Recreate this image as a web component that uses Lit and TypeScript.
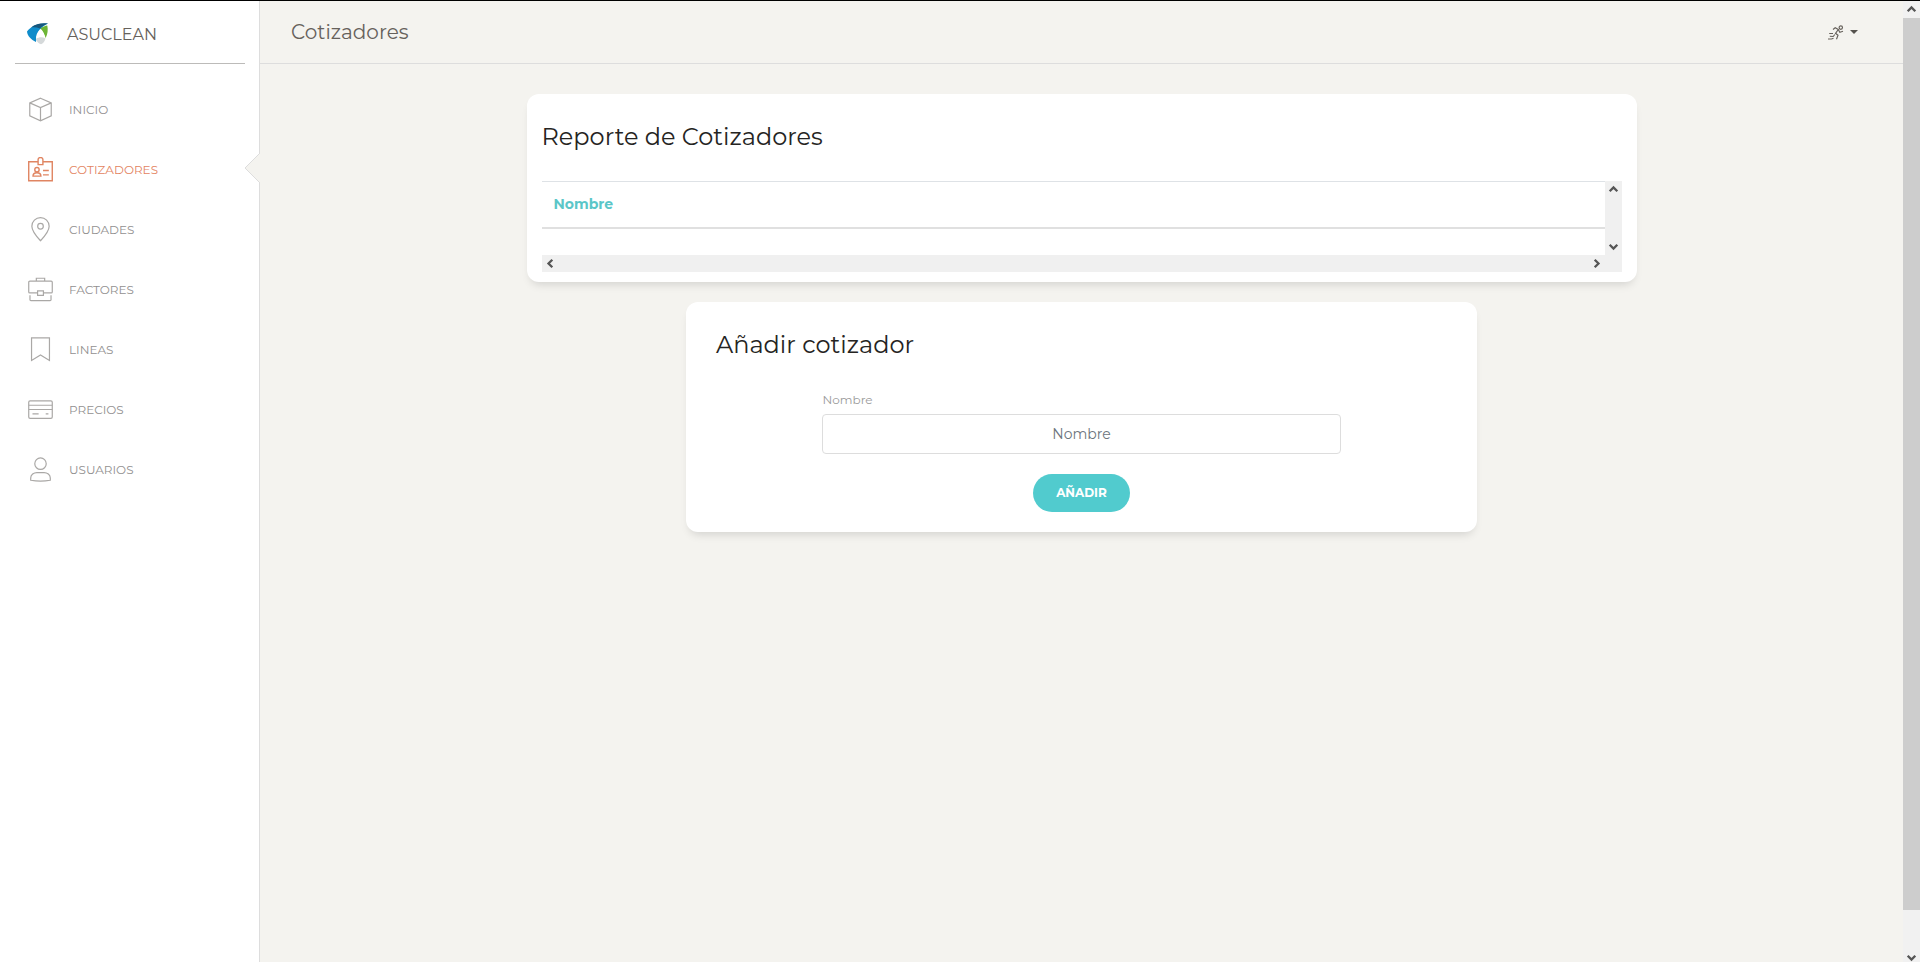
import { LitElement, html, css, svg } from "lit";
import { customElement } from "lit/decorators.js";

const icons: Record<string, unknown> = {
  box: svg`<path d="M12 1.2 22.3 5.6V18L12 22.8 1.7 18V5.6ZM1.7 5.6 12 10.2 22.3 5.6M12 10.2V22.8"/>`,
  badge: svg`<path d="M9.6 4.5H.7V22.8H23.3V4.5H14.4"/><path d="M9.7 2.5a2.3 2 0 0 1 4.6 0V7.3H9.7Z"/><circle cx="8.6" cy="12.2" r="2.1"/><path d="M4.8 18.4c0-2.3 1.4-3.3 3.8-3.3s3.8 1 3.8 3.3ZM14.4 13H20M14.4 17.2H20"/>`,
  pin: svg`<path d="M20.3 8.900C20.3 14 12 22.8 12 22.8S3.7 14 3.7 8.900a8.3 8.3 0 0 1 16.6 0Z"/><circle cx="12" cy="8.900" r="2.7"/>`,
  briefcase: svg`<path d="M8 4V1.2H16V4M9.2 15.3H1.7A1 1 0 0 1 .7 14.3V5A1 1 0 0 1 1.7 4H22.3A1 1 0 0 1 23.3 5V14.3A1 1 0 0 1 22.3 15.3H14.8M1.9 17.5V21.8A.9.9 0 0 0 2.8 22.7H21.2A.9.9 0 0 0 22.1 21.8V17.5M9.2 13.3H14.8V17.7H9.2Z"/>`,
  bookmark: svg`<path d="M3.4.8H20.6V22.6L12 17.3 3.4 22.6Z"/>`,
  card: svg`<rect x=".7" y="3.7" width="22.6" height="16.8" rx="1.3"/><path d="M.7 7.9H23.3M.7 12H23.3M4.3 16.2H10.2M17 16.2H19.6"/>`,
  user: svg`<circle cx="12" cy="6.4" r="5.5"/><path d="M2.6 22.3V20.2C2.6 17 5.6 15 8.5 15H15.5C18.4 15 21.4 17 21.4 20.2V22.3C15.5 23.3 8.5 23.3 2.6 22.3Z"/>`,
};

const items = [
  ["box", "INICIO"],
  ["badge", "COTIZADORES"],
  ["pin", "CIUDADES"],
  ["briefcase", "FACTORES"],
  ["bookmark", "LINEAS"],
  ["card", "PRECIOS"],
  ["user", "USUARIOS"],
];
const current = "COTIZADORES";

const chevron = (turn: string) => html`<svg class="chev ${turn}" viewBox="0 0 17 17"><path d="M4.7 10.3 8.5 6.5 12.3 10.3"/></svg>`;

@customElement("app-root")
export class AppRoot extends LitElement {
  static styles = css`
    :host { display: flex; box-sizing: border-box; height: 962px; border-top: 1px solid #000; background: #f4f3ef; font-family: Montserrat, Inter, sans-serif; color: #252422; overflow: hidden; }
    * { box-sizing: border-box; }
    .sidebar { width: 260px; flex: none; background: #fff; border-right: 1px solid #ddd; }
    .brand { display: flex; align-items: center; height: 63px; margin: 0 14px 0 15px; padding: 6px 0 0 12px; border-bottom: 1px solid #bcbbb9; }
    .logo { width: 22px; height: 22px; margin: 0 18px 2px 0; }
    .name { font-size: 16px; line-height: 20px; color: #66615b; }
    nav { padding-top: 15px; }
    .item { position: relative; display: flex; align-items: center; height: 60px; padding-left: 28px; color: #929090; font-size: 12px; }
    .item svg { width: 25px; height: 25px; margin-right: 16px; fill: none; stroke: #aaa8a6; stroke-width: 1.15; }
    .active { color: #e3845f; }
    .active svg { stroke: #e08562; stroke-width: 1.35; }
    .item .notch { position: absolute; right: -1px; top: 14px; width: 16px; height: 30px; margin: 0; stroke: #ddd; stroke-width: 1; }
    main { flex: 1; }
    header { display: flex; justify-content: space-between; align-items: center; height: 63px; padding: 0 45px 0 31px; border-bottom: 1px solid #ddd; }
    .page { font-size: 20px; color: #66615b; }
    .menu { display: flex; align-items: center; gap: 6px; }
    .run { width: 16px; height: 16px; margin-top: 2px; fill: none; stroke: #66615b; stroke-width: 1.15; }
    .caret { border: 4px solid transparent; border-top-color: #55524e; border-bottom: 0; }
    .card { margin: 0 auto; background: #fff; border-radius: 12px; box-shadow: 0 6px 10px -4px rgba(0,0,0,.15); }
    .report { width: 1110px; height: 188px; margin-top: 30px; padding: 26px 15px 0; }
    .form { width: 791px; height: 230px; margin-top: 20px; padding: 26px 30px 0; }
    h4 { margin: 0; font-size: 24px; line-height: 34px; font-weight: 400; }
    .scroller { display: grid; grid-template-columns: 1fr 17px; grid-template-rows: 74px 17px; margin-top: 27px; background: #f0f0f0; }
    .table { background: #fff; border-top: 1px solid #dee2e6; }
    .th { display: flex; align-items: center; height: 47px; padding: 0 12px 1px; border-bottom: 2px solid #e0e0e0; color: #5bc6c8; font-size: 14px; font-weight: 700; }
    .bar-v { display: flex; flex-direction: column; justify-content: space-between; }
    .bar-h { display: flex; justify-content: space-between; }
    .chev { display: block; width: 17px; height: 17px; flex: none; fill: none; stroke: #555; stroke-width: 2.3; }
    .down { transform: rotate(180deg); }
    .left { transform: rotate(-90deg); }
    .right { transform: rotate(90deg); }
    .fields { display: flex; flex-direction: column; align-items: center; width: 519px; margin: 28px auto 0; }
    label { align-self: flex-start; height: 24px; line-height: 20px; padding-left: .5px; font-size: 12px; color: #9a9a9a; }
    input { width: 519px; height: 40px; border: 1px solid #ddd; border-radius: 4px; font: 400 14px Montserrat, Inter, sans-serif; text-align: center; outline: 0; }
    input::placeholder { color: #6c757d; opacity: 1; }
    button { width: 97px; height: 38px; margin-top: 20px; padding: 0 0 1px; border: 0; border-radius: 30px; background: #51cbce; color: #fff; font: 700 12px Montserrat, Inter, sans-serif; }
    .page-scroll { display: flex; flex-direction: column; width: 17px; flex: none; background: #f1f1f1; }
    .thumb { height: 892px; flex: none; background: #cdcdcd; }
    .page-scroll .down { margin-top: 39px; }
  `;
  render() {
    return html`
      <aside class="sidebar">
        <div class="brand">
          <svg class="logo" viewBox="0 0 22 22">
            <path d="M0 8.5C4 2.500 13-.5 21 .6 14.500 3.500 9.500 9 9 19 4 16.500.5 13 0 8.500Z" fill="#0f8ccb"/>
            <path d="M4 4.500C9 .6 15-.3 21 .6 18 1.800 15 3.300 13 5.400 10 4.300 7 4 4 4.500Z" fill="#17577c"/>
            <path d="M13.500 5.500C15.500 3.800 18.500 2.800 20.300 2.600 21.200 7 20.700 11.500 18.600 15 17.500 11 16 8 13.500 5.500Z" fill="#6db535"/>
            <path d="M13.200 6C10 9.500 8.800 12.500 9 16H18.200C17.800 12 16 8.500 13.200 6Z" fill="#fff"/>
            <path d="M9 15.800C12.500 13.800 15.500 13.800 18.500 15.500 17.800 18.500 16 20.500 14 21.300 11.500 20.500 9.500 18.500 9 15.800Z" fill="#d5d9da"/>
          </svg>
          <span class="name">ASUCLEAN</span>
        </div>
        <nav>
          ${items.map(([icon, label]) => html`<div class="item ${label === current ? "active" : ""}">
            <svg viewBox="0 0 24 24">${icons[icon]}</svg><span>${label}</span>
            ${label === current ? html`<svg class="notch" viewBox="0 0 16 30"><path d="M16 0 1 15 16 30" fill="#f4f3ef"/></svg>` : ""}
          </div>`)}
        </nav>
      </aside>
      <main>
        <header>
          <span class="page">Cotizadores</span>
          <div class="menu">
            <svg class="run" viewBox="0 0 16 16"><circle cx="12.8" cy="2.600" r="1.700"/><path d="M5 4.500 7.200 2.800 10.300 4.500 7.500 8.300 10 10.300 8.500 14.300M10.300 4.500 11.800 7.300 15 6.300M6.800 9.500 5.200 11.500 1.800 11.200M1.200 8.500H5M0 14H3.500L5.500 13.200"/></svg>
            <span class="caret"></span>
          </div>
        </header>
        <section class="card report">
          <h4>Reporte de Cotizadores</h4>
          <div class="scroller">
            <div class="table"><div class="th">Nombre</div></div>
            <div class="bar-v">${chevron("up")}${chevron("down")}</div>
            <div class="bar-h">${chevron("left")}${chevron("right")}</div>
          </div>
        </section>
        <section class="card form">
          <h4>Añadir cotizador</h4>
          <div class="fields">
            <label>Nombre</label>
            <input placeholder="Nombre" />
            <button>AÑADIR</button>
          </div>
        </section>
      </main>
      <div class="page-scroll">${chevron("up")}<div class="thumb"></div>${chevron("down")}</div>
    `;
  }
}
